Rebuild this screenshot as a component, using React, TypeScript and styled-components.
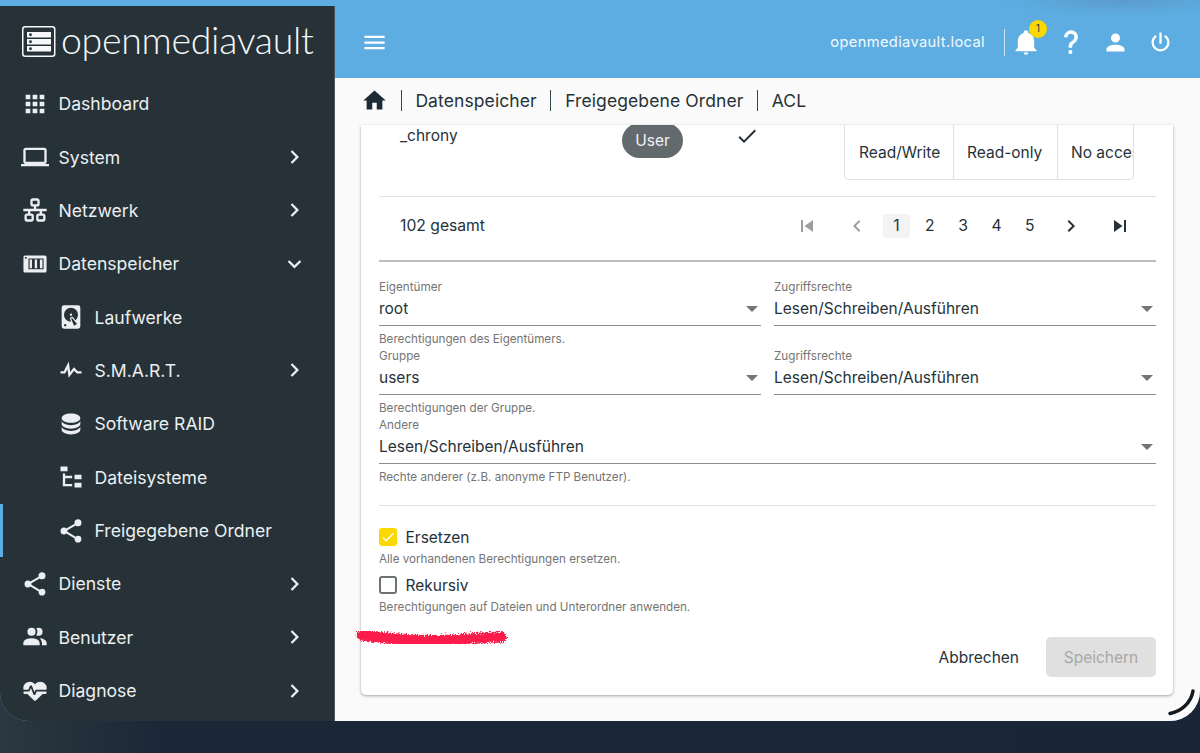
import React from 'react';
import styled, { createGlobalStyle } from 'styled-components';

const P = {
  apps: 'M16,20H20V16H16M16,14H20V10H16M10,8H14V4H10M16,8H20V4H16M10,14H14V10H10M4,14H8V10H4M4,20H8V16H4M10,20H14V16H10M4,8H8V4H4V8Z',
  laptop: 'M4,6H20V16H4M20,18A2,2 0 0,0 22,16V6C22,4.89 21.1,4 20,4H4C2.89,4 2,4.89 2,6V16A2,2 0 0,0 4,18H0V20H24V18H20Z',
  lan: 'M10,2C8.89,2 8,2.89 8,4V7C8,8.11 8.89,9 10,9H11V11H2V13H6V15H5C3.89,15 3,15.89 3,17V20C3,21.11 3.89,22 5,22H9C10.11,22 11,21.11 11,20V17C11,15.89 10.11,15 9,15H8V13H16V15H15C13.89,15 13,15.89 13,17V20C13,21.11 13.89,22 15,22H19C20.11,22 21,21.11 21,20V17C21,15.89 20.11,15 19,15H18V13H22V11H13V9H14C15.11,9 16,8.11 16,7V4C16,2.89 15.11,2 14,2H10M10,4H14V7H10V4M5,17H9V20H5V17M15,17H19V20H15V17Z',
  nas: 'M3.4,4.7H20.6A1.3,1.3 0 0,1 21.9,6V18A1.3,1.3 0 0,1 20.6,19.3H3.4A1.3,1.3 0 0,1 2.1,18V6A1.3,1.3 0 0,1 3.4,4.7M3.4,6V7.4H4.8V6H3.4M6.4,7.2V16.6H19.4V7.2H6.4M7.4,8.2H9.4V15.6H7.4V8.2M11.8,8.2H13.8V15.6H11.8V8.2M16.2,8.2H18.4V15.6H16.2V8.2Z',
  disk: 'M6,2H18A2,2 0 0,1 20,4V20A2,2 0 0,1 18,22H6A2,2 0 0,1 4,20V4A2,2 0 0,1 6,2M12,4A6,6 0 0,0 6,10C6,13.31 8.69,16 12.1,16L11.22,13.77C10.95,13.29 11.11,12.68 11.59,12.4L12.45,11.9C12.93,11.63 13.54,11.79 13.82,12.27L15.74,14.69C17.12,13.59 18,11.9 18,10A6,6 0 0,0 12,4M12,9A1,1 0 0,1 13,10A1,1 0 0,1 12,11A1,1 0 0,1 11,10A1,1 0 0,1 12,9M7,18A1,1 0 0,0 6,19A1,1 0 0,0 7,20A1,1 0 0,0 8,19A1,1 0 0,0 7,18M12.09,13.27L14.58,19.58L17.17,18.08L12.95,12.77L12.09,13.27Z',
  pulse: 'M3,13H5.79L10.1,4.79L11.28,13.75L14.5,9.66L17.83,13H21V15H17L14.67,12.67L9.92,18.73L8.94,11.31L7,15H3V13Z',
  database: 'M12,3C7.58,3 4,4.79 4,7C4,9.21 7.58,11 12,11C16.42,11 20,9.21 20,7C20,4.79 16.42,3 12,3M4,9V12C4,14.21 7.58,16 12,16C16.42,16 20,14.21 20,12V9C20,11.21 16.42,13 12,13C7.58,13 4,11.21 4,9M4,14V17C4,19.21 7.58,21 12,21C16.42,21 20,19.21 20,17V14C20,16.21 16.42,18 12,18C7.58,18 4,16.21 4,14Z',
  tree: 'M3,3H9V7H3V3M15,10H21V14H15V10M15,17H21V21H15V17M13,13H7V18H13V20H7L5,20V9H7V11H13V13Z',
  share: 'M18,16.08C17.24,16.08 16.56,16.38 16.04,16.85L8.91,12.7C8.96,12.47 9,12.24 9,12C9,11.76 8.96,11.53 8.91,11.3L15.96,7.19C16.5,7.69 17.21,8 18,8A3,3 0 0,0 21,5A3,3 0 0,0 18,2A3,3 0 0,0 15,5C15,5.24 15.04,5.47 15.09,5.7L8.04,9.81C7.5,9.31 6.79,9 6,9A3,3 0 0,0 3,12A3,3 0 0,0 6,15C6.79,15 7.5,14.69 8.04,14.19L15.16,18.34C15.11,18.55 15.08,18.77 15.08,19C15.08,20.61 16.39,21.91 18,21.91C19.61,21.91 20.92,20.61 20.92,19A2.92,2.92 0 0,0 18,16.08Z',
  users: 'M16 17V19H2V17S2 13 9 13 16 17 16 17M12.5 7.5A3.5 3.5 0 1 0 9 11A3.5 3.5 0 0 0 12.5 7.5M15.94 13A5.32 5.32 0 0 1 18 17V19H22V17S22 13.37 15.94 13M15 4A3.39 3.39 0 0 0 13.07 4.59A5 5 0 0 1 13.07 10.41A3.39 3.39 0 0 0 15 11A3.5 3.5 0 0 0 15 4Z',
  heart: 'M7.5,4A5.5,5.5 0 0,0 2,9.5C2,10 2.09,10.5 2.22,11H6.3L7.57,7.63C7.87,6.83 9.05,6.75 9.43,7.63L11.5,13L12.09,11.58C12.22,11.25 12.57,11 13,11H21.78C21.91,10.5 22,10 22,9.5A5.5,5.5 0 0,0 16.5,4C14.64,4 13,4.93 12,6.34C11,4.93 9.36,4 7.5,4M3,12.5A1,1 0 0,0 2,13.5A1,1 0 0,0 3,14.5H5.44L11,20C12,20.9 12,20.9 13,20L18.56,14.5H21A1,1 0 0,0 22,13.5A1,1 0 0,0 21,12.5H13.4L12.47,14.8C12.07,15.81 10.92,15.67 10.55,14.83L8.5,9.5L7.54,11.83C7.39,12.21 7.05,12.5 6.6,12.5H3Z',
  right: 'M8.59,16.58L13.17,12L8.59,7.41L10,6L16,12L10,18L8.59,16.58Z',
  left: 'M15.41,16.58L10.83,12L15.41,7.41L14,6L8,12L14,18L15.41,16.58Z',
  down: 'M7.41,8.58L12,13.17L16.59,8.58L18,10L12,16L6,10L7.41,8.58Z',
  menu: 'M3,6H21V8H3V6M3,11H21V13H3V11M3,16H21V18H3V16Z',
  bell: 'M21,19V20H3V19L5,17V11C5,7.9 7.03,5.17 10,4.29C10,4.19 10,4.1 10,4A2,2 0 0,1 12,2A2,2 0 0,1 14,4C14,4.1 14,4.19 14,4.29C16.97,5.17 19,7.9 19,11V17L21,19M14,21A2,2 0 0,1 12,23A2,2 0 0,1 10,21',
  help: 'M10,19H13V22H10V19M12,2C17.35,2.22 19.68,7.62 16.5,11.67C15.67,12.67 14.33,13.33 13.67,14.17C13,15 13,16 13,17H10C10,15.33 10,13.92 10.67,12.92C11.33,11.92 12.67,11.33 13.5,10.67C15.92,8.43 15.32,5.26 12,5A3,3 0 0,0 9,8H6A6,6 0 0,1 12,2Z',
  account: 'M12,4A4,4 0 0,1 16,8A4,4 0 0,1 12,12A4,4 0 0,1 8,8A4,4 0 0,1 12,4M12,14C16.42,14 20,15.79 20,18V20H4V18C4,15.79 7.58,14 12,14Z',
  power: 'M16.56,5.44L15.11,6.89C16.84,7.94 18,9.83 18,12A6,6 0 0,1 12,18A6,6 0 0,1 6,12C6,9.83 7.16,7.94 8.88,6.88L7.44,5.44C5.36,6.88 4,9.28 4,12A8,8 0 0,0 12,20A8,8 0 0,0 20,12C20,9.28 18.64,6.88 16.56,5.44M13,3H11V13H13',
  home: 'M10,20V14H14V20H19V12H22L12,3L2,12H5V20H10Z',
  check: 'M21,7L9,19L3.5,13.5L4.91,12.09L9,16.17L19.59,5.59L21,7Z',
  first: 'M6,18V6H8V18H6M9.5,12L18,6V18L9.5,12Z',
  last: 'M16,18H18V6H16M6,18L14.5,12L6,6V18Z',
};

const Icon: React.FC<{ d: string; size?: number; color?: string }> = ({ d, size = 24, color = 'currentColor' }) => (
  <svg width={size} height={size} viewBox="0 0 24 24" fill={color} fillRule={d === P.nas ? 'evenodd' : 'nonzero'} style={{ flex: 'none', display: 'block' }}>
    <path d={d} />
  </svg>
);

const GlobalStyle = createGlobalStyle`
  html, body { margin: 0; padding: 0; background: #1a2635; }
  body { font-family: Inter, "Liberation Sans", sans-serif; color: #263238; }
  * { box-sizing: border-box; }
`;

const Screen = styled.div`
  position: relative;
  width: 1200px;
  height: 753px;
  overflow: hidden;
  background: linear-gradient(90deg, #2b3841 0%, #25313b 60px, #1b2737 170px, #1a2635 100%);
`;

const Frame = styled.div`
  display: flex;
  height: 721px;
  background: #5dade2;
  border-radius: 0 0 30px 28px;
  overflow: hidden;
`;

const Sidebar = styled.nav`
  width: 335px;
  flex: none;
  margin-top: 6px;
  background: #263238;
  border-right: 1px solid #4a555c;
  color: #eceff1;
`;

const Brand = styled.div`
  display: flex;
  align-items: center;
  height: 71px;
  padding-left: 22px;
  gap: 5px;
`;

const BrandName = styled.span`
  font-family: Lato, sans-serif;
  font-weight: 300;
  font-size: 37.5px;
  letter-spacing: -0.3px;
  line-height: 1;
  color: #f5f7f8;
  padding-bottom: 3px;
`;

const NavItem = styled.div<{ $sub?: boolean; $active?: boolean }>`
  position: relative;
  display: flex;
  align-items: center;
  height: 53.36px;
  padding-left: ${(p) => (p.$sub ? '58px' : '22px')};
  font-size: 17.6px;
  ${(p) => p.$active && 'box-shadow: inset 3px 0 0 #5dade2;'}
`;

const NavIcon = styled.span`
  width: 26px;
  margin-right: 11px;
  display: flex;
  justify-content: center;
  margin-left: -0.5px;
`;

const NavChevron = styled.span`
  position: absolute;
  left: 281px;
  top: 50%;
  transform: translateY(-50%);
`;

const Main = styled.div`
  flex: 1;
  display: flex;
  flex-direction: column;
  min-width: 0;
`;

const Header = styled.header`
  display: flex;
  align-items: center;
  height: 78px;
  padding: 6px 25px 0 26px;
  color: #fff;
  background: radial-gradient(ellipse 120px 16px at 785px 0, #5a9ccb 0%, #5dade2 100%);
`;

const HostName = styled.span`
  margin-left: auto;
  font-size: 14.7px;
  letter-spacing: 0.35px;
  color: #f4f9fd;
`;

const HeaderDivider = styled.span`
  width: 1px;
  height: 27px;
  margin: 0 7px 0 19px;
  background: #cfe6f6;
`;

const HeaderIcon = styled.span<{ $first?: boolean }>`
  position: relative;
  width: 29px;
  height: 29px;
  display: flex;
  align-items: center;
  justify-content: center;
  margin-left: ${(p) => (p.$first ? 0 : 15.7)}px;
`;

const Badge = styled.span`
  position: absolute;
  top: -8px;
  right: -6px;
  width: 18px;
  height: 18px;
  border-radius: 50%;
  background: #fad900;
  color: #37474f;
  font-size: 10.5px;
  display: flex;
  align-items: center;
  justify-content: center;
`;

const Content = styled.div`
  flex: 1;
  display: flex;
  flex-direction: column;
  background: #fafafa;
  padding: 0 27px 26px 26px;
  min-height: 0;
`;

const Breadcrumb = styled.div`
  height: 47px;
  flex: none;
  display: flex;
  align-items: center;
  padding-bottom: 3px;
  font-size: 17.5px;
  letter-spacing: 0.1px;
  color: #263238;
`;

const HomeCrumb = styled.span`
  margin-right: -1px;
`;

const CrumbSep = styled.span`
  width: 1px;
  height: 21px;
  margin: 0 13.7px;
  background: #37474f;
`;

const Card = styled.section`
  flex: 1;
  background: #fff;
  border-radius: 0 0 5px 5px;
  box-shadow: 0 1px 3px rgba(0, 0, 0, 0.35);
  padding: 0 17px 18px 18px;
  display: flex;
  flex-direction: column;
  overflow: hidden;
`;

const TableRow = styled.div`
  height: 72px;
  flex: none;
  border-bottom: 1px solid #dfe1e2;
  display: grid;
  grid-template-columns: 222px 102px 120px auto;
  padding-left: 21px;
  font-size: 15.5px;
`;

const UserName = styled.span`
  padding-top: 1px;
`;

const Chip = styled.span`
  width: 61px;
  height: 35px;
  margin-top: -2px;
  border-radius: 18px;
  background: #636a6e;
  color: #f2f3f3;
  display: flex;
  align-items: center;
  justify-content: center;
`;

const CheckCell = styled.span`
  margin: -1px 0 0 10.5px;
`;

const Toggle = styled.div`
  display: flex;
  width: 290px;
  height: 55px;
  border: 1px solid #e0e0e0;
  border-top: none;
  border-radius: 0 0 5px 5px;
  overflow: hidden;
`;

const ToggleItem = styled.span<{ $w: number }>`
  width: ${(p) => p.$w}px;
  flex: none;
  border-left: 1px solid #e0e0e0;
  display: flex;
  align-items: center;
  padding: 0 13px;
  white-space: nowrap;
  &:first-child { border-left: none; padding-left: 14px; }
`;

const Pager = styled.div`
  height: 65px;
  flex: none;
  display: flex;
  align-items: center;
  padding: 0 23px 6px 21px;
  border-bottom: 2px solid #bdbdbd;
  font-size: 15.7px;
`;

const PagerTotal = styled.span`
  margin-right: auto;
`;

const PageBtn = styled.span<{ $selected?: boolean; $ml?: number; $color?: string }>`
  width: 26.67px;
  height: 24px;
  margin-left: ${(p) => p.$ml ?? 6.67}px;
  display: flex;
  align-items: center;
  justify-content: center;
  border-radius: 3px;
  color: ${(p) => p.$color ?? '#263238'};
  background: ${(p) => (p.$selected ? '#f3f3f3' : 'transparent')};
`;

const FormGrid = styled.div`
  display: grid;
  grid-template-columns: 1fr 1fr;
  column-gap: 13px;
  padding-top: 17px;
`;

const Field = styled.div<{ $wide?: boolean }>`
  grid-column: ${(p) => (p.$wide ? '1 / 3' : 'auto')};
`;

const FieldLabel = styled.div`
  height: 16px;
  line-height: 16px;
  font-size: 11.7px;
  color: #757575;
`;

const Select = styled.div`
  height: 31px;
  display: flex;
  align-items: center;
  justify-content: space-between;
  padding-bottom: 3px;
  font-size: 15.5px;
  border-bottom: 1px solid #8a8f92;
`;

const Caret = styled.span`
  width: 0;
  height: 0;
  margin-right: 3px;
  border-left: 6.5px solid transparent;
  border-right: 6.5px solid transparent;
  border-top: 6.5px solid #6f7578;
`;

const Hint = styled.div`
  height: 22px;
  padding-top: 5px;
  line-height: 16px;
  font-size: 11.65px;
  color: #757575;
`;

const Divider = styled.div`
  height: 1px;
  margin-top: 19px;
  background: #e0e0e0;
`;

const CheckRow = styled.div<{ $mt: number }>`
  display: flex;
  align-items: center;
  gap: 8.5px;
  margin-top: ${(p) => p.$mt}px;
  height: 18px;
  font-size: 15.5px;
`;

const CheckBox = styled.span<{ $on?: boolean }>`
  width: 18px;
  height: 18px;
  border-radius: 3px;
  display: flex;
  align-items: center;
  justify-content: center;
  background: ${(p) => (p.$on ? '#fad900' : 'transparent')};
  border: ${(p) => (p.$on ? 'none' : '2px solid #6c7275')};
`;

const Actions = styled.div`
  margin-top: auto;
  display: flex;
  justify-content: flex-end;
  align-items: center;
  gap: 27px;
`;

const TextButton = styled.span`
  font-size: 15.5px;
`;

const SaveButton = styled.span`
  width: 110px;
  height: 40px;
  border-radius: 5px;
  background: #e0e0e0;
  color: #a8a8a8;
  font-size: 15.5px;
  display: flex;
  align-items: center;
  justify-content: center;
`;

const Scribble = styled.svg`
  position: absolute;
  left: 350px;
  top: 624px;
`;

const CornerArc = styled.svg`
  position: absolute;
  left: 1160px;
  top: 682px;
`;

const mainNav = [
  { label: 'Dashboard', icon: P.apps },
  { label: 'System', icon: P.laptop, chevron: P.right },
  { label: 'Netzwerk', icon: P.lan, chevron: P.right },
  { label: 'Datenspeicher', icon: P.nas, chevron: P.down },
  { label: 'Laufwerke', icon: P.disk, sub: true },
  { label: 'S.M.A.R.T.', icon: P.pulse, sub: true, chevron: P.right },
  { label: 'Software RAID', icon: P.database, sub: true },
  { label: 'Dateisysteme', icon: P.tree, sub: true },
  { label: 'Freigegebene Ordner', icon: P.share, sub: true, active: true },
  { label: 'Dienste', icon: P.share, chevron: P.right },
  { label: 'Benutzer', icon: P.users, chevron: P.right },
  { label: 'Diagnose', icon: P.heart, chevron: P.right },
];

const App: React.FC = () => (
  <Screen>
    <GlobalStyle />
    <Frame>
      <Sidebar>
        <Brand>
          <svg width="34" height="31" viewBox="0 0 34 31" style={{ flex: 'none' }}>
            <rect x="0.75" y="0.75" width="32" height="29.5" rx="2.5" fill="none" stroke="#f5f7f8" strokeWidth="1.5" />
            {[6, 13, 20].map((y) => (
              <g key={y}>
                <rect x="5" y={y} width="24" height="5.5" fill="#f5f7f8" />
                <circle cx="8.5" cy={y + 2.75} r="1.4" fill="#263238" />
              </g>
            ))}
          </svg>
          <BrandName>openmediavault</BrandName>
        </Brand>
        {mainNav.map((item) => (
          <NavItem key={item.label} $sub={item.sub} $active={item.active}>
            <NavIcon>
              <Icon d={item.icon} size={28} />
            </NavIcon>
            {item.label}
            {item.chevron && (
              <NavChevron>
                <Icon d={item.chevron} size={27} />
              </NavChevron>
            )}
          </NavItem>
        ))}
      </Sidebar>
      <Main>
        <Header>
          <Icon d={P.menu} size={27} />
          <HostName>openmediavault.local</HostName>
          <HeaderDivider />
          <HeaderIcon $first>
            <Icon d={P.bell} size={28} />
            <Badge>1</Badge>
          </HeaderIcon>
          <HeaderIcon>
            <Icon d={P.help} size={28} />
          </HeaderIcon>
          <HeaderIcon>
            <Icon d={P.account} size={27} />
          </HeaderIcon>
          <HeaderIcon>
            <Icon d={P.power} size={27} />
          </HeaderIcon>
        </Header>
        <Content>
          <Breadcrumb>
            <HomeCrumb>
              <Icon d={P.home} size={27} color="#1c2a35" />
            </HomeCrumb>
            <CrumbSep />
            Datenspeicher
            <CrumbSep />
            Freigegebene Ordner
            <CrumbSep />
            ACL
          </Breadcrumb>
          <Card>
            <TableRow>
              <UserName>_chrony</UserName>
              <Chip>User</Chip>
              <CheckCell>
                <Icon d={P.check} size={24} color="#263238" />
              </CheckCell>
              <Toggle>
                <ToggleItem $w={108}>Read/Write</ToggleItem>
                <ToggleItem $w={104}>Read-only</ToggleItem>
                <ToggleItem $w={78}>No access</ToggleItem>
              </Toggle>
            </TableRow>
            <Pager>
              <PagerTotal>102 gesamt</PagerTotal>
              <PageBtn $color="#9e9e9e"><Icon d={P.first} size={24} /></PageBtn>
              <PageBtn $ml={23.3} $color="#9e9e9e"><Icon d={P.left} size={24} /></PageBtn>
              <PageBtn $ml={13.3} $selected>1</PageBtn>
              <PageBtn>2</PageBtn>
              <PageBtn>3</PageBtn>
              <PageBtn>4</PageBtn>
              <PageBtn>5</PageBtn>
              <PageBtn $ml={14.3}><Icon d={P.right} size={24} /></PageBtn>
              <PageBtn $ml={22.3}><Icon d={P.last} size={24} /></PageBtn>
            </Pager>
            <FormGrid>
              <Field>
                <FieldLabel>Eigentümer</FieldLabel>
                <Select>root<Caret /></Select>
                <Hint>Berechtigungen des Eigentümers.</Hint>
              </Field>
              <Field>
                <FieldLabel>Zugriffsrechte</FieldLabel>
                <Select>Lesen/Schreiben/Ausführen<Caret /></Select>
              </Field>
              <Field>
                <FieldLabel>Gruppe</FieldLabel>
                <Select>users<Caret /></Select>
                <Hint>Berechtigungen der Gruppe.</Hint>
              </Field>
              <Field>
                <FieldLabel>Zugriffsrechte</FieldLabel>
                <Select>Lesen/Schreiben/Ausführen<Caret /></Select>
              </Field>
              <Field $wide>
                <FieldLabel>Andere</FieldLabel>
                <Select>Lesen/Schreiben/Ausführen<Caret /></Select>
                <Hint>Rechte anderer (z.B. anonyme FTP Benutzer).</Hint>
              </Field>
            </FormGrid>
            <Divider />
            <CheckRow $mt={22}>
              <CheckBox $on><Icon d={P.check} size={16} color="#fff" /></CheckBox>
              Ersetzen
            </CheckRow>
            <Hint>Alle vorhandenen Berechtigungen ersetzen.</Hint>
            <CheckRow $mt={8}>
              <CheckBox />
              Rekursiv
            </CheckRow>
            <Hint>Berechtigungen auf Dateien und Unterordner anwenden.</Hint>
            <Actions>
              <TextButton>Abbrechen</TextButton>
              <SaveButton>Speichern</SaveButton>
            </Actions>
          </Card>
        </Content>
      </Main>
    </Frame>
    <Scribble width="170" height="36" viewBox="0 0 170 36">
      <defs>
        <filter id="rough" x="-5%" y="-60%" width="110%" height="220%">
          <feTurbulence type="fractalNoise" baseFrequency="0.7" numOctaves="2" seed="4" />
          <feDisplacementMap in="SourceGraphic" scale="7" />
        </filter>
      </defs>
      <path d="M12 11 C40 15 60 17 90 16.5 C115 16 135 13 151 13" fill="none" stroke="#fb1d4b" strokeWidth="11" strokeLinecap="round" filter="url(#rough)" />
    </Scribble>
    <CornerArc width="40" height="40" viewBox="0 0 40 40">
      <path d="M10 31.5 C21 29.5 31 21 33 9" fill="none" stroke="#15191d" strokeWidth="3.5" strokeLinecap="round" />
    </CornerArc>
  </Screen>
);

export default App;
